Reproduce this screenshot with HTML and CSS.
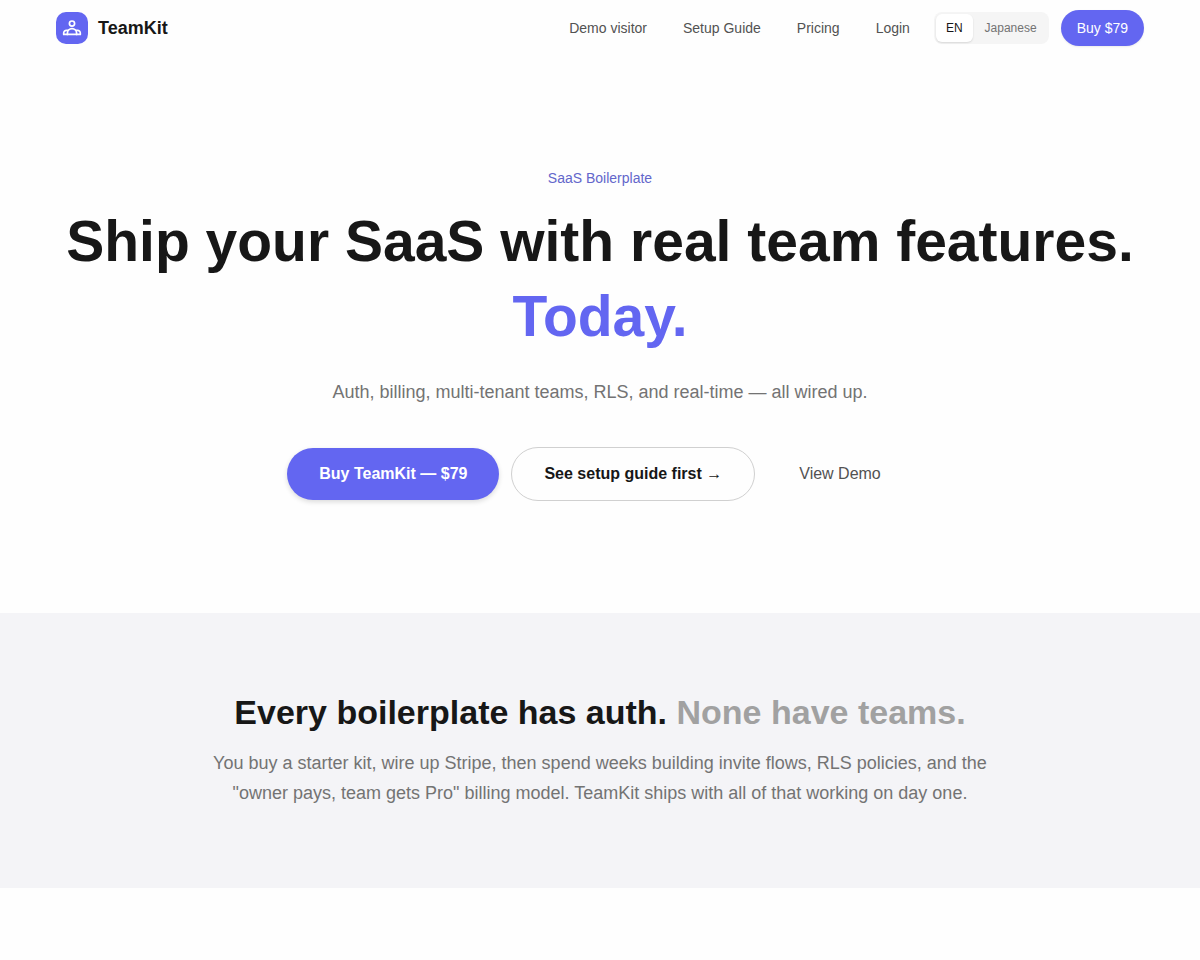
FILE: index.html
```html
<!DOCTYPE html>
<html lang="en">
<head>
<meta charset="utf-8">
<meta name="viewport" content="width=device-width, initial-scale=1">
<title>TeamKit</title>
<link rel="stylesheet" href="styles.css">
</head>
<body>
<header class="header">
  <a class="brand" href="#">
    <span class="brand-mark">
      <svg width="20" height="20" viewBox="0 0 20 20" fill="none" stroke="currentColor" stroke-width="1.7" stroke-linecap="round" stroke-linejoin="round" aria-hidden="true">
        <circle cx="10" cy="5.6" r="2.6"/>
        <path d="M5.4 16.4v-1.2a4.6 4.6 0 0 1 9.2 0v1.2"/>
        <path d="M5.8 12.3H4.4a2.7 2.7 0 0 0-2.7 2.7v1.4h16.6V15a2.7 2.7 0 0 0-2.7-2.7h-1.4"/>
      </svg>
    </span>
    <span class="brand-name">TeamKit</span>
  </a>
  <nav class="nav" aria-label="Main">
    <a class="nav-link" href="#">Demo visitor</a>
    <a class="nav-link" href="#">Setup Guide</a>
    <a class="nav-link" href="#">Pricing</a>
    <a class="nav-link" href="#">Login</a>
    <div class="lang" role="group" aria-label="Language">
      <button class="lang-option lang-active" type="button" aria-pressed="true">EN</button>
      <button class="lang-option" type="button" aria-pressed="false">Japanese</button>
    </div>
    <a class="nav-buy" href="#">Buy $79</a>
  </nav>
</header>
<main>
  <section class="hero">
    <p class="eyebrow">SaaS Boilerplate</p>
    <h1 class="hero-title">Ship your SaaS with real team features.<br><span class="accent">Today.</span></h1>
    <p class="lead">Auth, billing, multi-tenant teams, RLS, and real-time — all wired up.</p>
    <div class="actions">
      <a class="button button-primary" href="#">Buy TeamKit — $79</a>
      <a class="button button-outline" href="#">See setup guide first →</a>
      <a class="button button-plain" href="#">View Demo</a>
    </div>
  </section>
  <section class="problem">
    <div class="problem-inner">
      <h2 class="problem-title">Every boilerplate has auth. <span class="muted">None have teams.</span></h2>
      <p class="problem-text">You buy a starter kit, wire up Stripe, then spend weeks building invite flows, RLS policies, and the "owner pays, team gets Pro" billing model. TeamKit ships with all of that working on day one.</p>
    </div>
  </section>
</main>
</body>
</html>
```
FILE: styles.css
```css
* {
  box-sizing: border-box;
}

body {
  margin: 0;
  background: #fefefe;
  color: #171717;
  font-family: "Liberation Sans", Arial, sans-serif;
}

h1, h2, p {
  margin: 0;
}

a {
  color: inherit;
  text-decoration: none;
}

.header {
  display: flex;
  align-items: center;
  justify-content: space-between;
  min-height: 56px;
  padding: 0 56px;
}

.brand {
  display: flex;
  align-items: center;
  gap: 10px;
}

.brand-mark {
  display: grid;
  place-items: center;
  width: 32px;
  height: 32px;
  border-radius: 10px;
  background: #6366f1;
  color: #fff;
}

.brand-name {
  font-size: 18px;
  font-weight: 700;
  line-height: 28px;
}

.nav {
  display: flex;
  align-items: center;
  gap: 12px;
}

.nav-link {
  padding: 8px 12px;
  color: #525252;
  font-size: 14px;
  line-height: 20px;
}

.lang {
  display: flex;
  gap: 2px;
  padding: 2px;
  border-radius: 8px;
  background: #f5f5f5;
}

.lang-option {
  padding: 6px 10px;
  border: 0;
  border-radius: 6px;
  background: transparent;
  color: #737373;
  font-family: inherit;
  font-size: 12px;
  line-height: 16px;
}

.lang-active {
  background: #fff;
  color: #171717;
  box-shadow: 0 1px 2px rgba(0, 0, 0, 0.12);
}

.nav-buy {
  padding: 8px 16px;
  border-radius: 18px;
  background: #6366f1;
  color: #fff;
  font-size: 14px;
  line-height: 20px;
  box-shadow: 0 1px 2px rgba(0, 0, 0, 0.08);
}

.hero {
  padding: 112px 56px;
  text-align: center;
}

.eyebrow {
  color: #6366cb;
  font-size: 14px;
  line-height: 20px;
}

.hero-title {
  margin-top: 16px;
  font-size: 57px;
  font-weight: 700;
  line-height: 75px;
}

.accent {
  color: #6366f1;
}

.lead {
  margin-top: 24px;
  color: #737373;
  font-size: 18px;
  line-height: 29px;
}

.actions {
  display: flex;
  flex-wrap: wrap;
  align-items: center;
  justify-content: center;
  gap: 12px;
  margin-top: 40px;
}

.button {
  padding: 14px 32px;
  border-radius: 28px;
  font-size: 16px;
  font-weight: 700;
  line-height: 24px;
}

.button-primary {
  background: #6366f1;
  color: #fff;
  box-shadow: 0 2px 5px rgba(0, 0, 0, 0.14);
}

.button-outline {
  border: 1px solid #d0d0d0;
}

.button-plain {
  color: #525252;
  font-weight: 400;
}

.problem {
  padding: 80px 56px;
  background: #f4f4f7;
  text-align: center;
}

.problem-inner {
  max-width: 800px;
  margin: 0 auto;
}

.problem-title {
  font-size: 34px;
  font-weight: 700;
  line-height: 39px;
}

.problem-text {
  margin-top: 16px;
  color: #737373;
  font-size: 18px;
  line-height: 30px;
}

.muted {
  color: #a1a1a1;
}
```
